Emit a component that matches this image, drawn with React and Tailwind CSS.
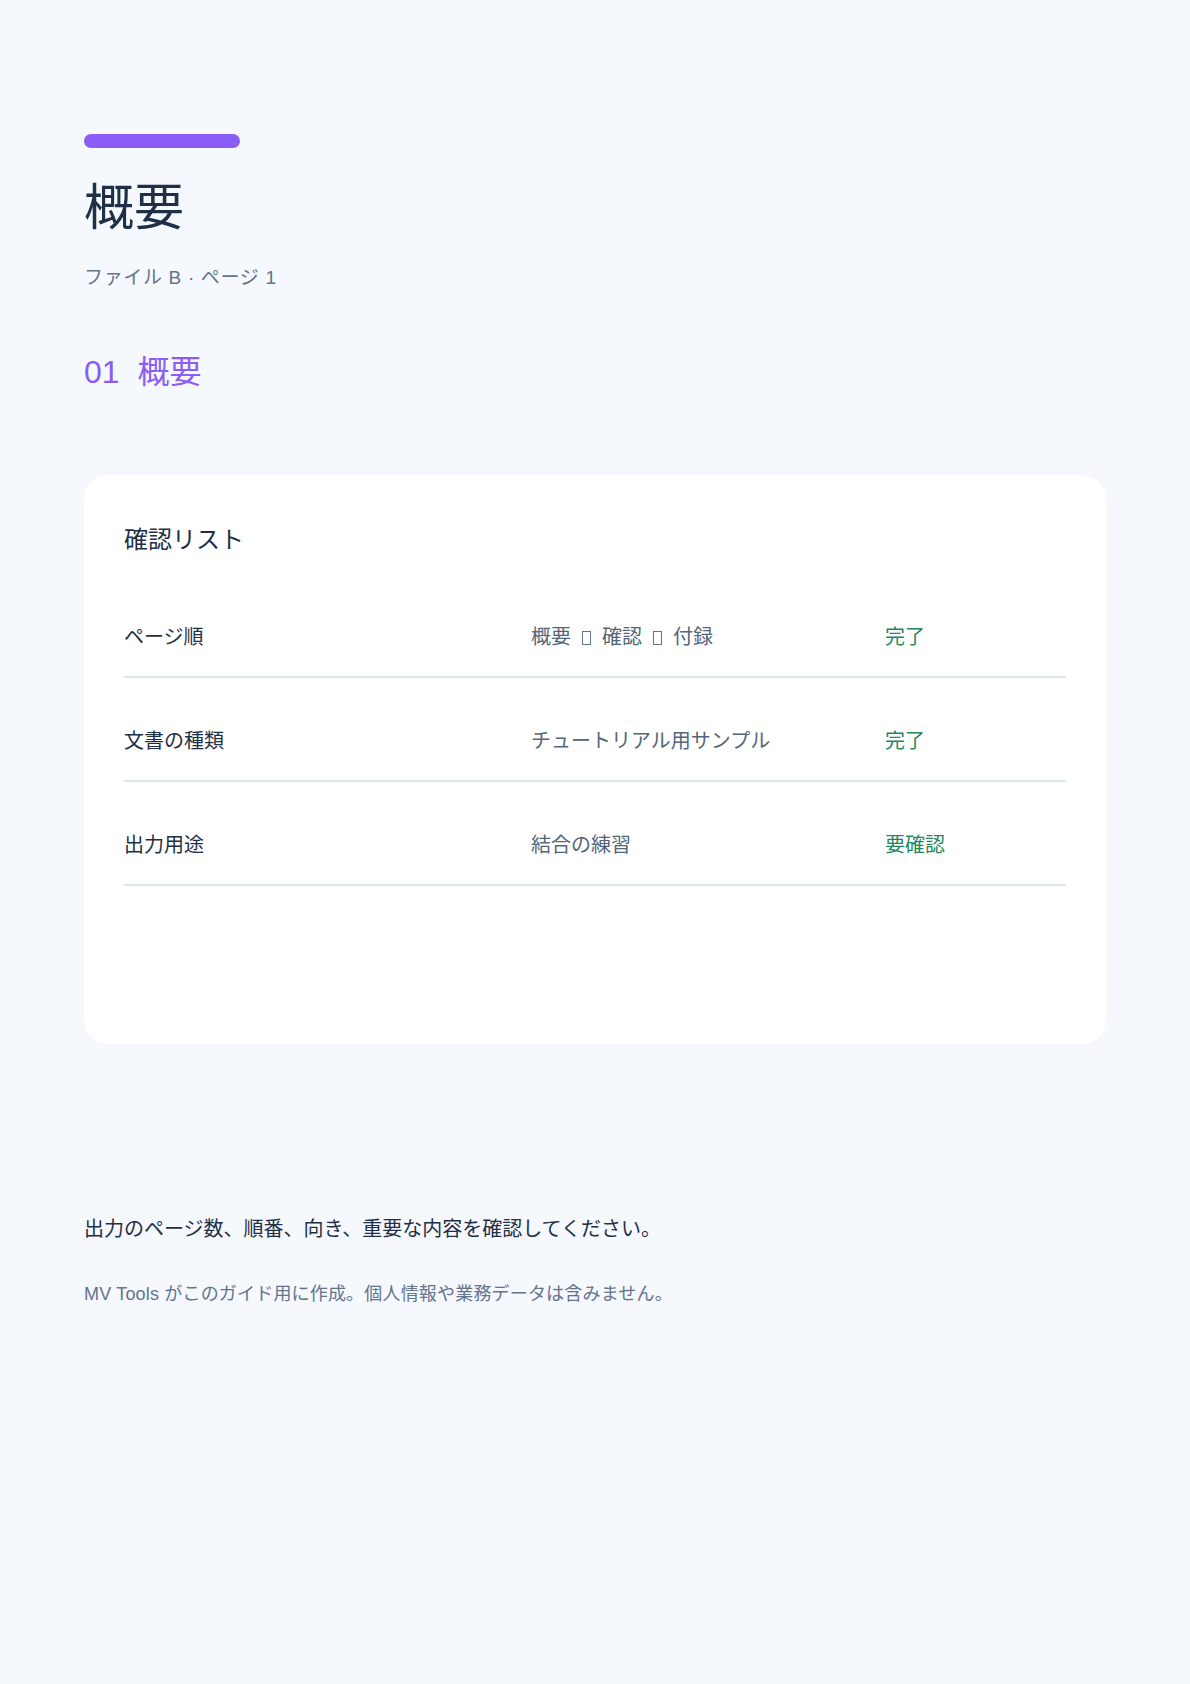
export default function App() {
  const rows = [
    { label: "ページ順", value: ["概要", "確認", "付録"], status: "完了" },
    { label: "文書の種類", value: "チュートリアル用サンプル", status: "完了" },
    { label: "出力用途", value: "結合の練習", status: "要確認" },
  ];
  const Tofu = () => (
    <span className="mx-[11px] inline-block h-[14px] w-[9px] border border-[#64748b] align-[-1px]" />
  );
  return (
    <div
      className="min-h-[1684px] w-full bg-[#f5f8fd] px-[84px] pt-[134px]"
      style={{ fontFamily: '"Liberation Sans", "Noto Sans CJK JP", sans-serif' }}
    >
      <div className="h-[14px] w-[156px] rounded-full bg-[#8b5cf6]" />
      <h1 className="mt-[30px] text-[50px] leading-[60px] text-[#1f2f45]">概要</h1>
      <p className="mt-[26px] text-[19px] leading-[28px] tracking-[0.035em] text-[#64748b]">ファイル B · ページ 1</p>
      <h2 className="mt-[60px] text-[32px] leading-[40px] text-[#8b5cf6]">01&nbsp;&nbsp;概要</h2>

      <div className="mt-[83px] h-[569px] rounded-[24px] bg-white px-[40px] pt-[47px]">
        <div className="text-[24px] leading-[36px] text-[#1f2f45]">確認リスト</div>
        <div className="mt-[39px] flex flex-col gap-[23px]">
          {rows.map((r, i) => (
            <div
              key={i}
              className="grid grid-cols-[407px_354px_1fr] items-center border-b-2 border-[#dde5ef] pt-[25px] pb-[24px] text-[20px] leading-[30px]"
            >
              <div className="text-[#1f2f45]">{r.label}</div>
              <div className="text-[#55657a]">
                {Array.isArray(r.value) ? (
                  <>
                    {r.value[0]}
                    <Tofu />
                    {r.value[1]}
                    <Tofu />
                    {r.value[2]}
                  </>
                ) : (
                  r.value
                )}
              </div>
              <div className="text-[#23875f]">{r.status}</div>
            </div>
          ))}
        </div>
      </div>

      <p className="mt-[170px] text-[20px] leading-[30px] text-[#1f2f45]">
        出力のページ数、順番、向き、重要な内容を確認してください。
      </p>
      <p className="mt-[37px] text-[18px] leading-[27px] tracking-[0.01em] text-[#64748b]">
        MV Tools がこのガイド用に作成。個人情報や業務データは含みません。
      </p>
    </div>
  );
}
